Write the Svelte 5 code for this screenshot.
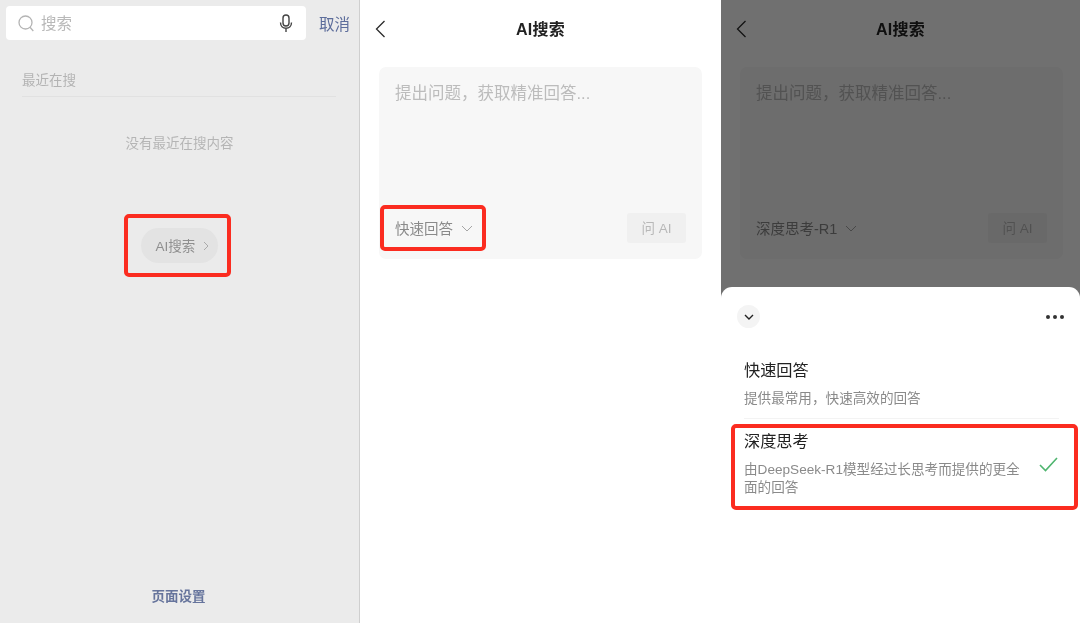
<script>
  const options = [
    { title: '快速回答', desc: '提供最常用，快速高效的回答', checked: false },
    { title: '深度思考', desc: '由DeepSeek-R1模型经过长思考而提供的更全面的回答', checked: true }
  ];
</script>

{#snippet aiPage(label)}
  <header class="nav">
    <svg class="back" width="11" height="18" viewBox="0 0 11 18" fill="none" stroke="currentColor" stroke-width="1.3"><path d="M9.500 1 1.500 9l8 8"/></svg>
    <h1>AI搜索</h1>
  </header>
  <section class="card">
    <p class="placeholder">提出问题，获取精准回答...</p>
    <div class="card-foot">
      <span class="mode"><span class="mode-label">{label}</span>
        <svg width="12" height="7" viewBox="0 0 12 7" fill="none" stroke="currentColor" stroke-width="1"><path d="M1 1l5 5 5-5"/></svg>
      </span>
      <span class="ask">问 AI</span>
    </div>
  </section>
{/snippet}

<main class="screens">
  <div class="panel search">
    <div class="search-row">
      <div class="search-box">
        <svg width="16" height="17" viewBox="0 0 16 17" fill="none" stroke="#b4b4b4" stroke-width="1.3"><circle cx="7.500" cy="7.500" r="6.500"/><path d="M12 12.300 15.300 16"/></svg>
        <span class="hint">搜索</span>
        <svg class="mic" width="14" height="19" viewBox="0 0 14 19" fill="none" stroke="#444" stroke-width="1.4"><rect x="4" y="1" width="6" height="11" rx="3"/><path d="M1.500 8.500c0 3.500 2.400 5.800 5.500 5.800s5.500-2.300 5.500-5.800M7 14.300V18"/></svg>
      </div>
      <span class="cancel">取消</span>
    </div>
    <div class="recent">最近在搜</div>
    <p class="empty">没有最近在搜内容</p>
    <div class="pill-wrap">
      <span class="pill"><span class="pill-label">AI搜索</span>
        <svg width="6" height="10" viewBox="0 0 6 10" fill="none" stroke="#aaa" stroke-width="1"><path d="M1 1l4 4-4 4"/></svg>
      </span>
    </div>
    <footer class="settings">页面设置</footer>
    <i class="mark mark-pill"></i>
  </div>

  <div class="panel ai">
    {@render aiPage('快速回答')}
    <i class="mark mark-mode"></i>
  </div>

  <div class="panel ai dimmed">
    {@render aiPage('深度思考-R1')}
    <div class="scrim"></div>
    <div class="sheet">
      <div class="sheet-top">
        <span class="collapse">
          <svg width="10" height="6" viewBox="0 0 10 6" fill="none" stroke="#222" stroke-width="1.4"><path d="M1 1l4 4 4-4"/></svg>
        </span>
        <span class="dots"><b></b><b></b><b></b></span>
      </div>
      {#each options as o}
        <div class="option" class:checked={o.checked}>
          <div class="option-text">
            <div class="option-title">{o.title}</div>
            <div class="option-desc">{o.desc}</div>
          </div>
          {#if o.checked}
            <svg class="tick" width="19" height="15" viewBox="0 0 19 15" fill="none" stroke="#4fb56f" stroke-width="1.600"><path d="M1 8l5.500 5.500L18 1"/></svg>
          {/if}
        </div>
      {/each}
      <i class="mark mark-option"></i>
    </div>
  </div>
</main>

<style>
  :global(body) {
    margin: 0;
    background: #fff;
  }
  .screens {
    display: grid;
    grid-template-columns: 360px 361px 359px;
    height: 623px;
    overflow: hidden;
    font-family: "Liberation Sans", "Noto Sans CJK SC", sans-serif;
    filter: blur(0.35px);
  }
  .panel {
    position: relative;
    display: flex;
    flex-direction: column;
    height: 623px;
    box-sizing: border-box;
  }
  .search {
    background: #ebebeb;
    border-right: 1px solid #cfcfcf;
  }
  .search-row {
    display: flex;
    align-items: center;
    margin: 6px 9px 0 6px;
    gap: 13px;
  }
  .search-box {
    flex: 1;
    height: 34px;
    display: flex;
    align-items: center;
    padding: 0 13px 0 12px;
    background: #fff;
    border-radius: 4px;
  }
  .hint {
    margin: 0 0 2px 7px;
    font-size: 15.500px;
    color: #b9b9b9;
  }
  .mic {
    margin-left: auto;
  }
  .cancel {
    margin-bottom: 1px;
    font-size: 15.500px;
    color: #5d6d9b;
  }
  .recent {
    margin: 32px 23px 0 22px;
    padding-bottom: 6px;
    border-bottom: 1px solid #e1e1e1;
    font-size: 13.500px;
    line-height: 18px;
    color: #b3b3b3;
  }
  .empty {
    margin: 38px 0 0;
    text-align: center;
    font-size: 13.500px;
    line-height: 18px;
    color: #b5b5b5;
  }
  .pill-wrap {
    display: flex;
    justify-content: center;
    margin-top: 75px;
  }
  .pill {
    display: inline-flex;
    align-items: center;
    gap: 8px;
    height: 35px;
    padding: 0 9px 0 15px;
    border-radius: 18px;
    background: #e3e3e3;
    font-size: 13.500px;
    color: #8f8f8f;
  }
  .pill-label {
    margin-bottom: 2px;
  }
  .settings {
    margin-top: auto;
    padding: 0 2px 17px 0;
    text-align: center;
    font-size: 13.500px;
    line-height: 18px;
    font-weight: 700;
    color: #66749c;
  }
  .ai {
    background: #fff;
  }
  .nav {
    position: relative;
    height: 56px;
    display: flex;
    align-items: center;
    justify-content: center;
    color: #2a2a2a;
  }
  .nav h1 {
    margin: 0;
    font-size: 16px;
    font-weight: 700;
    letter-spacing: 0.3px;
    color: #222;
  }
  .back {
    position: absolute;
    left: 15px;
    top: 20px;
  }
  .card {
    margin: 11px 19px 0 19px;
    height: 192px;
    padding: 16px;
    box-sizing: border-box;
    display: flex;
    flex-direction: column;
    background: #f7f7f7;
    border-radius: 7px;
  }
  .dimmed .card {
    margin-right: 17px;
  }
  .placeholder {
    margin: 0;
    font-size: 16.500px;
    line-height: 20px;
    color: #bcbcbc;
  }
  .card-foot {
    margin-top: auto;
    display: flex;
    align-items: center;
    justify-content: space-between;
  }
  .mode {
    display: inline-flex;
    align-items: center;
    gap: 8px;
    font-size: 14.500px;
    color: #8a8a8a;
  }
  .mode-label {
    margin-bottom: 2px;
  }
  .mode svg {
    color: #a5a5a5;
  }
  .ask {
    width: 59px;
    height: 30px;
    box-sizing: border-box;
    padding-bottom: 2px;
    display: flex;
    align-items: center;
    justify-content: center;
    background: #f0f0f0;
    border-radius: 3px;
    font-size: 13.500px;
    color: #b8b8b8;
  }
  .scrim {
    position: absolute;
    inset: 0;
    background: rgba(0, 0, 0, 0.56);
  }
  .sheet {
    position: absolute;
    left: 0;
    right: 0;
    bottom: 0;
    top: 287px;
    background: #fff;
    border-radius: 11px 11px 0 0;
  }
  .sheet-top {
    display: flex;
    align-items: center;
    justify-content: space-between;
    padding: 18px 16px 0 16px;
  }
  .collapse {
    width: 23px;
    height: 23px;
    display: flex;
    align-items: center;
    justify-content: center;
    border-radius: 50%;
    background: #f4f4f4;
  }
  .dots {
    display: flex;
    gap: 3px;
  }
  .dots b {
    width: 4px;
    height: 4px;
    border-radius: 50%;
    background: #333;
  }
  .option {
    margin: 0 21px 0 23px;
    padding: 31px 0 10px;
    display: flex;
    align-items: flex-start;
    justify-content: space-between;
    border-bottom: 1px solid #f3f3f3;
  }
  .option.checked {
    padding-top: 11px;
    border-bottom: 0;
  }
  .option-title {
    font-size: 16.200px;
    line-height: 22px;
    color: #222;
  }
  .option-desc {
    margin-top: 9px;
    font-size: 13.600px;
    line-height: 18px;
    color: #8a8a8a;
  }
  .checked .option-desc {
    width: 280px;
  }
  .tick {
    margin: 27px 1px 0 0;
  }
  .mark {
    position: absolute;
    box-sizing: border-box;
    border: 4px solid #fb2c20;
    border-radius: 5px;
    pointer-events: none;
  }
  .mark-pill {
    left: 124px;
    top: 214px;
    width: 107px;
    height: 63px;
  }
  .mark-mode {
    left: 20px;
    top: 205px;
    width: 106px;
    height: 46px;
  }
  .mark-option {
    left: 10px;
    top: 137px;
    width: 347px;
    height: 86px;
  }
</style>
